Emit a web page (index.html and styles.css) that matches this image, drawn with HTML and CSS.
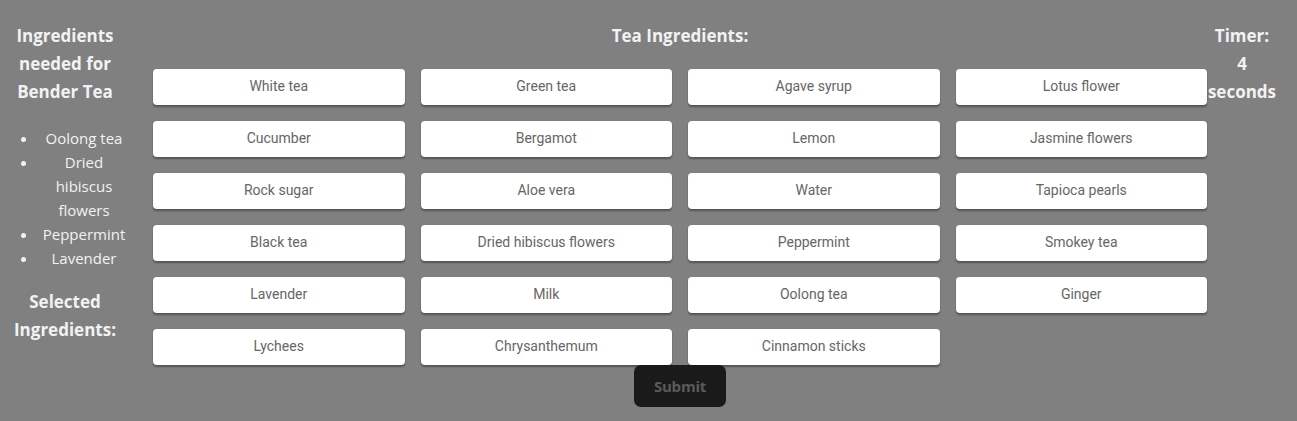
FILE: index.html
```html
<!DOCTYPE html>
<html>
<head>
<meta charset="utf-8">
<link rel="stylesheet" href="styles.css">
</head>
<body>
<div class="app">
  <aside class="sidebar">
    <h2 class="heading">Ingredients needed for Bender Tea</h2>
    <ul class="needed">
      <li>Oolong tea</li>
      <li>Dried hibiscus flowers</li>
      <li>Peppermint</li>
      <li>Lavender</li>
    </ul>
    <h2 class="heading selected">Selected Ingredients:</h2>
  </aside>
  <main class="main">
    <h2 class="heading title">Tea Ingredients:</h2>
    <div class="grid">
      <button class="ing">White tea</button>
      <button class="ing">Green tea</button>
      <button class="ing">Agave syrup</button>
      <button class="ing">Lotus flower</button>
      <button class="ing">Cucumber</button>
      <button class="ing">Bergamot</button>
      <button class="ing">Lemon</button>
      <button class="ing">Jasmine flowers</button>
      <button class="ing">Rock sugar</button>
      <button class="ing">Aloe vera</button>
      <button class="ing">Water</button>
      <button class="ing">Tapioca pearls</button>
      <button class="ing">Black tea</button>
      <button class="ing">Dried hibiscus flowers</button>
      <button class="ing">Peppermint</button>
      <button class="ing">Smokey tea</button>
      <button class="ing">Lavender</button>
      <button class="ing">Milk</button>
      <button class="ing">Oolong tea</button>
      <button class="ing">Ginger</button>
      <button class="ing">Lychees</button>
      <button class="ing">Chrysanthemum</button>
      <button class="ing">Cinnamon sticks</button>
    </div>
    <button class="submit">Submit</button>
  </main>
  <aside class="timer">
    <h2 class="heading timer-text">Timer: 4 seconds</h2>
  </aside>
</div>
</body>
</html>
```
FILE: styles.css
```css
html, body {
  margin: 0;
  padding: 0;
  background: #808080;
  height: 100%;
}
body {
  font-family: "Open Sans", "Noto Sans", sans-serif;
  color: #f2f2f2;
}
.app {
  display: flex;
  padding-top: 22px;
}
.heading {
  margin: 0;
  font-size: 17px;
  font-weight: 700;
  line-height: 28px;
  text-align: center;
  color: #f2f2f2;
}
.sidebar {
  width: 130px;
  flex: none;
  text-align: center;
}
.sidebar .heading {
  padding: 0 4px;
}
.needed {
  margin: 20px 0 18px 0;
  padding-left: 38px;
  font-size: 15px;
  line-height: 24px;
  text-align: center;
}
.main {
  flex: none;
  width: 1054px;
  margin-left: 23px;
  display: flex;
  flex-direction: column;
  align-items: center;
}
.title {
  margin-bottom: 19px;
}
.grid {
  width: 100%;
  display: grid;
  grid-template-columns: repeat(4, 1fr);
  column-gap: 16px;
  row-gap: 16px;
}
.ing {
  height: 36px;
  border: none;
  border-radius: 4px;
  background: #ffffff;
  box-shadow: 0 2px 2px rgba(0,0,0,0.35);
  font-family: Roboto, "Liberation Sans", sans-serif;
  font-size: 14px;
  color: #666666;
  padding: 0 0 2px 0;
}
.submit {
  width: 92px;
  height: 42px;
  border: none;
  border-radius: 7px;
  background: #1a1a1a;
  color: #5a5a5a;
  font-family: "Open Sans", "Noto Sans", sans-serif;
  font-weight: 700;
  font-size: 15px;
  letter-spacing: -0.2px;
}
.timer {
  flex: 1;
  display: flex;
  justify-content: center;
  padding-right: 20px;
}
.timer-text {
  width: min-content;
}
```
